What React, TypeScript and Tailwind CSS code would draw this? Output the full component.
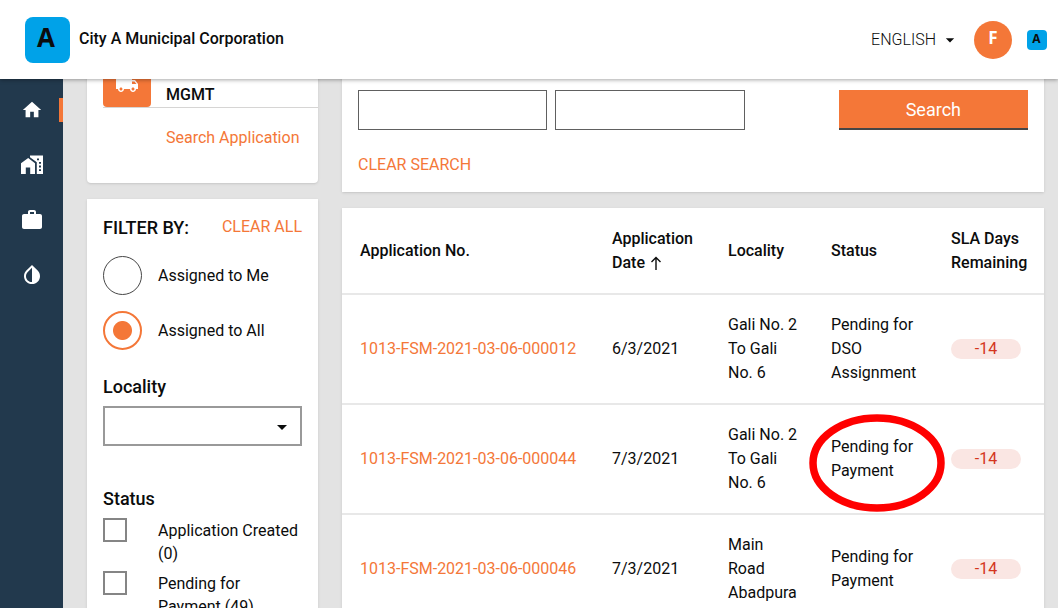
import { useState } from "react";
import {
  MdArrowDropDown,
  MdHome,
  MdInvertColors,
  MdLocalShipping,
  MdWork,
} from "react-icons/md";

function PropertyIcon({ className }: { className?: string }) {
  return (
    <svg viewBox="0 0 24 24" className={className} fill="currentColor" aria-hidden="true">
      <path d="M8.2 5 1 10.3V21h4.8v-6.5h4.4V21H15V10.3z" />
      <path
        fillRule="evenodd"
        d="M10 2.5V4.2l6.8 5V21H23V2.5zM17 5.4h2v1.8h-2zM19 9h2v1.8h-2zM19 12.6h2v1.8h-2zM19 16.2h2V18h-2z"
      />
    </svg>
  );
}

const navItems = [
  { name: "Home", Icon: MdHome, size: "size-[22px]", active: true },
  { name: "Properties", Icon: PropertyIcon, size: "size-6", active: false },
  { name: "Work", Icon: MdWork, size: "size-6", active: false },
  { name: "Water", Icon: MdInvertColors, size: "size-6", active: false },
];

const statuses = ["Application Created (0)", "Pending for Payment (49)"];

const rows = [
  { id: "1013-FSM-2021-03-06-000012", date: "6/3/2021", locality: "Gali No. 2 To Gali No. 6", status: "Pending for DSO Assignment", sla: -14, marked: false },
  { id: "1013-FSM-2021-03-06-000044", date: "7/3/2021", locality: "Gali No. 2 To Gali No. 6", status: "Pending for Payment", sla: -14, marked: true },
  { id: "1013-FSM-2021-03-06-000046", date: "7/3/2021", locality: "Main Road Abadpura", status: "Pending for Payment", sla: -14, marked: false },
];

function Header() {
  return (
    <header className="relative z-10 flex h-[79px] shrink-0 items-center bg-white pr-[11px] pl-[25px] shadow-[0_1px_4px_rgba(0,0,0,0.35)]">
      <div className="flex h-[46px] w-[45px] items-center justify-center rounded-lg bg-[#00a2e8] pr-[3px] pb-[5px] font-['Open_Sans',sans-serif] text-[26px] font-bold">
        A
      </div>
      <h1 className="ml-[9px] pb-px font-medium">City A Municipal Corporation</h1>
      <button type="button" className="ml-auto flex items-center gap-1 font-light">
        ENGLISH
        <MdArrowDropDown className="size-5" />
      </button>
      <button type="button" className="ml-[14px] flex size-[38px] items-center justify-center rounded-full bg-[#f47738] pb-1 font-['Open_Sans',sans-serif] text-[17px] font-bold text-white">
        F
      </button>
      <div className="ml-[15px] flex size-5 items-center justify-center rounded bg-[#00a2e8] pr-px pb-px font-['Open_Sans',sans-serif] text-xs font-bold">
        A
      </div>
    </header>
  );
}

function Sidebar() {
  return (
    <nav className="flex w-[63px] shrink-0 flex-col gap-[31px] bg-[#22394d] pt-[19px] text-white">
      {navItems.map(({ name, Icon, size, active }) => (
        <a
          key={name}
          href="#"
          aria-label={name}
          className={
            active
              ? "flex h-6 items-center justify-center border-r-4 border-[#f47738] pl-1"
              : "flex h-6 items-center justify-center"
          }
        >
          <Icon className={size} />
        </a>
      ))}
    </nav>
  );
}

function Filters() {
  const [assigned, setAssigned] = useState("Assigned to All");
  return (
    <section className="bg-white px-4 pt-[15px] shadow-sm">
      <div className="flex items-center justify-between">
        <h2 className="text-lg leading-7 font-medium">FILTER BY:</h2>
        <button type="button" className="pb-0.5 text-[#f47738]">CLEAR ALL</button>
      </div>
      <div className="mt-[14px] flex flex-col gap-4">
        {["Assigned to Me", "Assigned to All"].map((option) => (
          <label key={option} className="flex items-center gap-4">
            <input
              type="radio"
              name="assigned"
              checked={assigned === option}
              onChange={() => setAssigned(option)}
              className="size-[39px] appearance-none rounded-full border border-[#464646] checked:border-2 checked:border-[#f47738] checked:bg-[radial-gradient(circle,#f47738_9px,transparent_10px)]"
            />
            {option}
          </label>
        ))}
      </div>
      <label htmlFor="locality" className="mt-6 block text-lg leading-[26px] font-medium">
        Locality
      </label>
      <div className="relative mt-[6px]">
        <select id="locality" className="block h-10 w-full appearance-none border-2 border-[#999] bg-white px-2">
          <option value=""></option>
        </select>
        <MdArrowDropDown className="pointer-events-none absolute top-[9px] right-2 size-6" />
      </div>
      <h3 className="mt-10 text-lg leading-[26px] font-medium">Status</h3>
      <div className="mt-[6px] flex flex-col gap-[6px]">
        {statuses.map((status) => (
          <label key={status} className="flex items-start gap-[31px] leading-[23px]">
            <input type="checkbox" className="size-6 shrink-0 appearance-none border-2 border-[#858585]" />
            <span className="pt-px">{status}</span>
          </label>
        ))}
      </div>
    </section>
  );
}

function SearchPanel() {
  return (
    <form className="bg-white px-4 pt-[27px] pb-[15px] shadow-sm" onSubmit={(e) => e.preventDefault()}>
      <div className="grid grid-cols-[1fr_1fr_78px_1fr] gap-2">
        <input aria-label="Application number" className="h-10 min-w-0 border border-[#606060] px-2" />
        <input aria-label="Mobile number" className="h-10 min-w-0 border border-[#606060] px-2" />
        <button type="submit" className="col-start-4 h-10 border-b-2 border-[#464646] bg-[#f47738] pt-0.5 text-lg text-white">
          Search
        </button>
      </div>
      <button type="button" className="mt-[23px] block leading-6 text-[#f47738]">
        CLEAR SEARCH
      </button>
    </form>
  );
}

function Inbox() {
  return (
    <section className="bg-white shadow-sm">
      <table className="w-full table-fixed text-left">
        <colgroup>
          <col />
          <col className="w-[116px]" />
          <col className="w-[103px]" />
          <col className="w-[120px]" />
          <col className="w-[111px]" />
        </colgroup>
        <thead>
          <tr className="h-[86px] border-b-2 border-[#e8e8e8] *:pr-3 *:pl-[18px] *:font-medium">
            <th scope="col">Application No.</th>
            <th scope="col">
              Application Date{" "}
              <svg viewBox="0 0 14 16" className="inline h-4 w-[14px]" fill="none" stroke="currentColor" strokeWidth="1.4" aria-hidden="true">
                <path d="M7 15V2.5M2.5 7 7 2.5 11.5 7" />
              </svg>
            </th>
            <th scope="col">Locality</th>
            <th scope="col">Status</th>
            <th scope="col">SLA Days Remaining</th>
          </tr>
        </thead>
        <tbody>
          {rows.map((row) => (
            <tr key={row.id} className="h-[110px] border-b-2 border-[#e8e8e8] *:pr-3 *:pl-[18px]">
              <td>
                <a href="#" className="text-[#f47738]">{row.id}</a>
              </td>
              <td>{row.date}</td>
              <td>{row.locality}</td>
              <td>
                <div className="relative">
                  {row.status}
                  {row.marked && (
                    <svg viewBox="0 0 136 98" className="pointer-events-none absolute -top-5 -left-[22px] h-[98px] w-[136px] max-w-none overflow-visible" aria-hidden="true">
                      <ellipse cx="68" cy="48" rx="64" ry="45" fill="none" stroke="#ff0000" strokeWidth="7.5" />
                    </svg>
                  )}
                </div>
              </td>
              <td>
                <span className="block w-[70px] rounded-full bg-[#fae6e3] text-center leading-5 text-[#d4351c]">
                  {row.sla}
                </span>
              </td>
            </tr>
          ))}
        </tbody>
      </table>
    </section>
  );
}

export default function App() {
  return (
    <div className="flex h-screen flex-col overflow-hidden bg-[#e3e3e3] font-[Roboto,sans-serif] text-base leading-6 text-[#0b0c0c]">
      <Header />
      <div className="flex min-h-0 flex-1">
        <Sidebar />
        <main className="flex min-w-0 flex-1 gap-6 overflow-hidden pr-[14px] pl-6">
          <div className="-mt-5 flex w-[231px] shrink-0 flex-col gap-4">
            <section className="rounded bg-white pb-[33px] pl-4 shadow">
              <div className="flex items-end gap-[15px] border-b border-[#d6d5d4]">
                <div className="flex size-12 items-center justify-center rounded bg-[#f47738] pt-0.5 text-white">
                  <MdLocalShipping className="size-6" />
                </div>
                <h2 className="font-medium">MGMT</h2>
              </div>
              <a href="#" className="mt-[18px] ml-[63px] block text-[#f47738]">
                Search Application
              </a>
            </section>
            <Filters />
          </div>
          <div className="-mt-4 flex min-w-0 flex-1 flex-col gap-4">
            <SearchPanel />
            <Inbox />
          </div>
        </main>
      </div>
    </div>
  );
}
